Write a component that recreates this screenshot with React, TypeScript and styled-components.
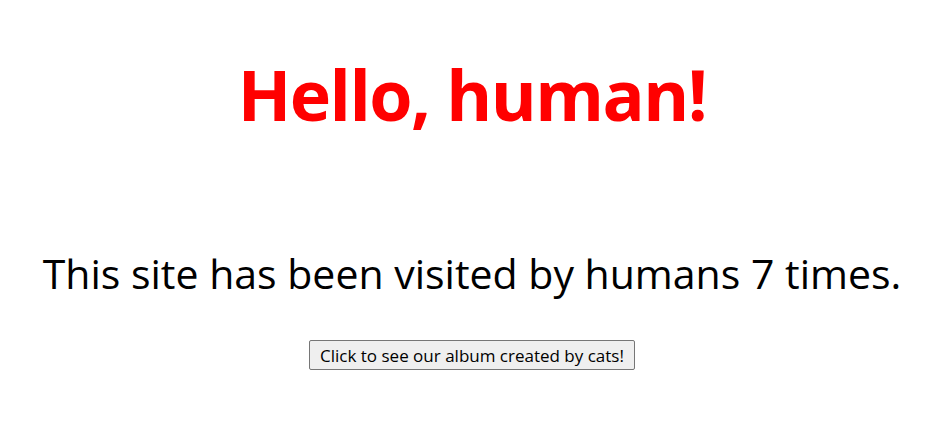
import React from "react";
import styled, { createGlobalStyle } from "styled-components";

const Global = createGlobalStyle`
  html, body { margin: 0; padding: 0; background: #ffffff; }
  body { font-family: "Open Sans", "Noto Sans", sans-serif; }
`;

const Page = styled.main`
  display: flex;
  flex-direction: column;
  align-items: center;
  text-align: center;
  padding-top: 44px;
`;

const Title = styled.h1`
  margin: 0;
  color: #ff0000;
  font-family: "Open Sans", sans-serif;
  font-weight: 700;
  font-size: 70px;
  letter-spacing: -1.5px;
  line-height: 100px;
`;

const Visits = styled.p`
  margin: 101px 0 0;
  color: #000000;
  font-family: "Open Sans", sans-serif;
  font-size: 41px;
  line-height: 56px;
`;

const AlbumButton = styled.button`
  margin-top: 39px;
  padding: 0 10px;
  height: 30px;
  font-family: "Open Sans", sans-serif;
  font-size: 17px;
  color: #000000;
  background: #efefef;
  border: 1px solid #767676;
  border-radius: 2px;
`;

export default function App() {
  return (
    <>
      <Global />
      <Page>
        <Title>Hello, human!</Title>
        <Visits>This site has been visited by humans 7 times.</Visits>
        <AlbumButton>Click to see our album created by cats!</AlbumButton>
      </Page>
    </>
  );
}
